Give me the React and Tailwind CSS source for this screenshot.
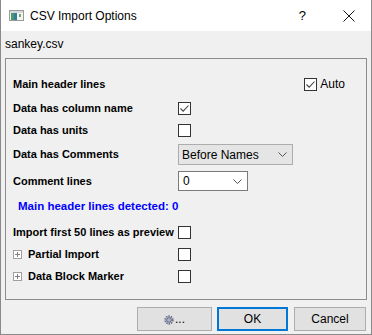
import React from "react";

const font = { fontFamily: '"Liberation Sans", Arial, sans-serif' };

function Check({ checked, className = "" }) {
  return (
    <div className={"w-[13px] h-[13px] border border-[#333333] bg-white flex items-center justify-center " + className}>
      {checked && (
        <svg width="11" height="11" viewBox="0 0 11 11">
          <path d="M1.5 5.5 L4.2 8.2 L9.5 2.5" fill="none" stroke="#444444" strokeWidth="1.1" />
        </svg>
      )}
    </div>
  );
}

function Chevron() {
  return (
    <svg width="9" height="5" viewBox="0 0 9 5">
      <path d="M0.5 0.5 L4.5 4.5 L8.5 0.5" fill="none" stroke="#555555" strokeWidth="1" />
    </svg>
  );
}

function PlusBox() {
  return (
    <div className="w-[9px] h-[9px] border border-[#a0a0a0] bg-white relative">
      <div className="absolute left-[1px] top-[3px] w-[5px] h-px bg-[#808080]" />
      <div className="absolute left-[3px] top-[1px] w-px h-[5px] bg-[#808080]" />
    </div>
  );
}

function Row({ h = "h-[20px]", mt, label, children }) {
  return (
    <div className={`flex items-center ${h} ${mt}`}>
      <div className="w-[165px] shrink-0 font-bold text-[11px] text-black whitespace-nowrap">{label}</div>
      {children}
    </div>
  );
}

export default function App() {
  return (
    <div
      className="w-[372px] h-[335px] bg-[#f0f0f0] border-x border-b border-[#8a8a8a] flex flex-col text-[12px] text-black"
      style={font}
    >
      {/* Title bar */}
      <div className="h-[31px] bg-white flex items-center shrink-0">
        <div className="ml-[8px] w-[15px] h-[11px]">
          <svg width="15" height="11" viewBox="0 0 15 11">
            <rect x="0.5" y="0.5" width="14" height="10" fill="#f4f4f4" stroke="#9a9a9a" />
            <rect x="1" y="1" width="13" height="2" fill="#d8d8d8" />
            <rect x="2" y="3" width="6" height="7" fill="#3a7a9a" />
            <rect x="2" y="3" width="3" height="7" fill="#4a9a6a" />
            <rect x="10" y="4" width="2" height="3" fill="#6aaa6a" />
          </svg>
        </div>
        <div className="ml-[6px] text-[12px] leading-none">CSV Import Options</div>
        <div className="ml-auto mr-[37px] text-[13px] leading-none">?</div>
        <div className="mr-[16px]">
          <svg width="12" height="12" viewBox="0 0 12 12">
            <path d="M0.5 0.5 L11.5 11.5 M11.5 0.5 L0.5 11.5" stroke="#111111" strokeWidth="1" />
          </svg>
        </div>
      </div>

      {/* file name */}
      <div className="pl-[4px] h-[26px] flex items-center shrink-0">sankey.csv</div>

      {/* Panel */}
      <div className="ml-[4px] mr-[4px] mt-[1px] h-[242px] border border-[#8c8c8c] pl-[7px] flex flex-col shrink-0">
        <Row mt="mt-[15px]" label="Main header lines">
          <div className="ml-auto mr-[21px] flex items-center">
            <Check checked />
            <span className="ml-[3px] text-[12px]">Auto</span>
          </div>
        </Row>
        <Row mt="mt-[4px]" label="Data has column name">
          <Check checked />
        </Row>
        <Row mt="mt-[2px]" label="Data has units">
          <Check />
        </Row>
        <Row h="h-[21px]" mt="mt-[4px]" label="Data has Comments">
          <div className="w-[115px] h-[21px] bg-[#e5e5e5] border border-[#adadad] flex items-center pl-[3px] pr-[5px]">
            <span>Before Names</span>
            <span className="ml-auto flex"><Chevron /></span>
          </div>
        </Row>
        <Row mt="mt-[6px]" label="Comment lines">
          <div className="w-[70px] h-[20px] bg-white border border-[#7a7a7a] flex items-center pl-[4px] pr-[5px]">
            <span>0</span>
            <span className="ml-auto flex"><Chevron /></span>
          </div>
        </Row>
        <div className="h-[20px] mt-[6px] flex items-center pl-[5px] font-bold text-[11.5px] text-[#0000ff]">
          Main header lines detected: 0
        </div>
        <Row mt="mt-[5px]" label="Import first 50 lines as preview">
          <Check />
        </Row>
        <Row
          mt="mt-[2px]"
          label={
            <span className="flex items-center">
              <PlusBox />
              <span className="ml-[6px]">Partial Import</span>
            </span>
          }
        >
          <Check />
        </Row>
        <Row
          mt="mt-[2px]"
          label={
            <span className="flex items-center">
              <PlusBox />
              <span className="ml-[6px]">Data Block Marker</span>
            </span>
          }
        >
          <Check />
        </Row>
      </div>

      {/* Buttons */}
      <div className="flex mt-[7px] pl-[136px]">
        <div className="w-[75px] h-[24px] bg-[#e1e1e1] border border-[#adadad] flex items-center justify-center">
          <svg width="10" height="10" viewBox="0 0 10 10" className="mt-[1px]">
            <circle cx="5" cy="5" r="3.8" fill="none" stroke="#6a7288" strokeWidth="1.8" strokeDasharray="1.5 0.9" />
            <circle cx="5" cy="5" r="2.3" fill="#b8c8f0" stroke="#4a5a90" strokeWidth="1" />
            <circle cx="5" cy="5" r="0.9" fill="#e8a040" />
          </svg>
          <span className="leading-none ml-[1px]">...</span>
        </div>
        <div className="ml-[5px] w-[71px] h-[24px] bg-[#e1e1e1] border-2 border-[#0078d7] flex items-center justify-center">
          OK
        </div>
        <div className="ml-[6px] w-[72px] h-[24px] bg-[#e1e1e1] border border-[#adadad] flex items-center justify-center">
          Cancel
        </div>
      </div>
    </div>
  );
}
